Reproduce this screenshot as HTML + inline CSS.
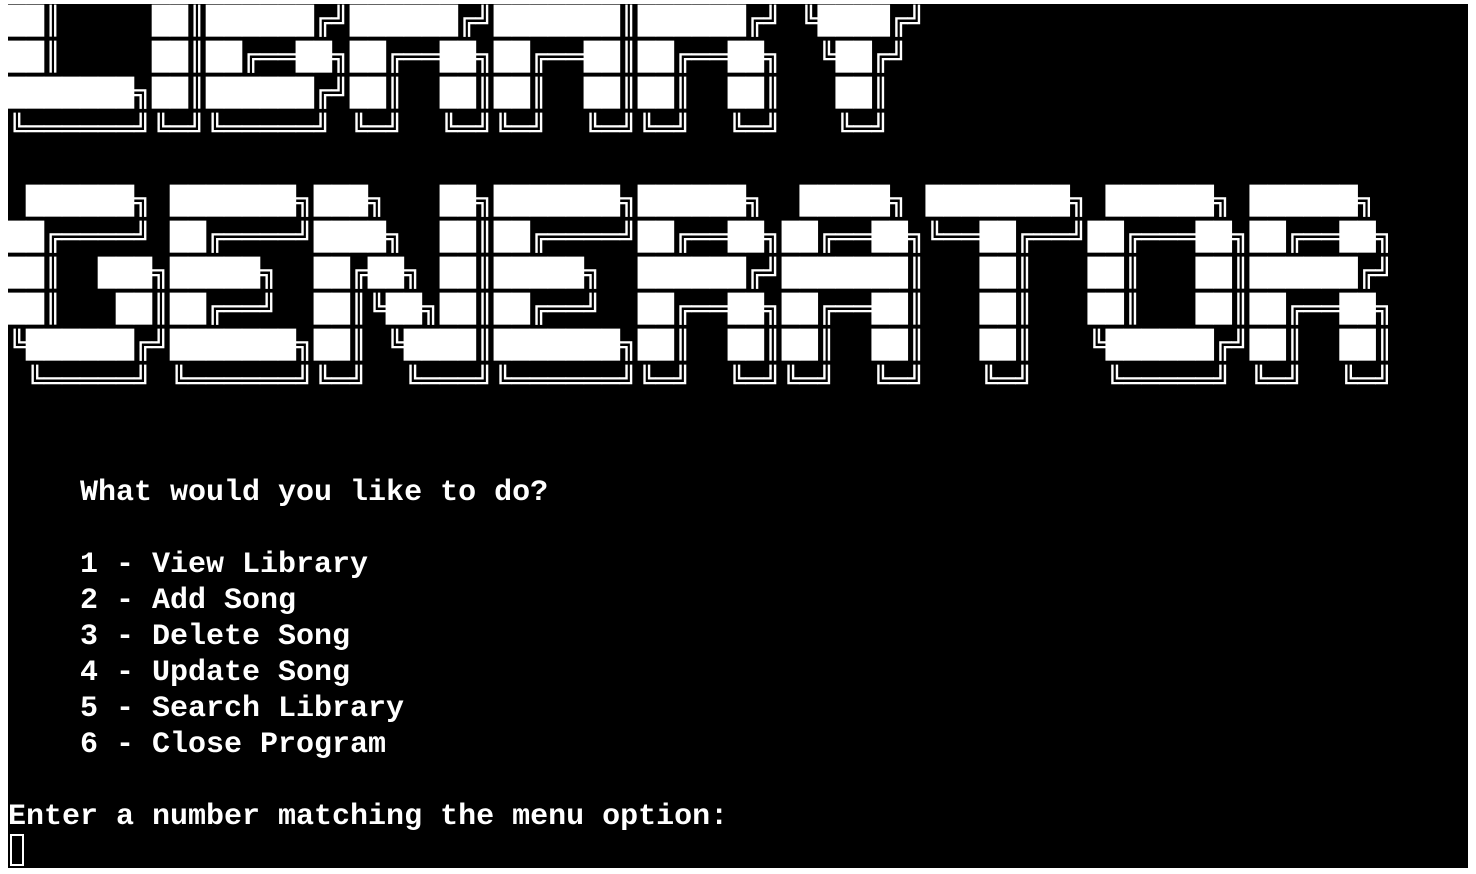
<!DOCTYPE html>
<html><head><meta charset="utf-8"><style>
html,body{margin:0;padding:0;background:#fff;width:1476px;height:874px;overflow:hidden}
#t{position:absolute;left:8px;top:4px;width:1460px;height:864px;background:#000;overflow:hidden}
.l{height:36px;line-height:36px;white-space:pre;color:#fff;font-size:30px}
.a{font-family:"DejaVu Sans Mono","Liberation Mono",monospace;font-size:29.9px;transform:scaleY(0.9);transform-origin:50% 50%}
.x{font-family:"Liberation Mono","DejaVu Sans Mono",monospace;font-weight:bold;position:relative;top:3px}
#c{position:absolute;left:2px;top:830px;width:14px;height:32px;border:2px solid #fff;box-sizing:border-box}
</style></head><body><div id="t">
<div class="l a">██║     ██║██████╔╝██████╔╝███████║██████╔╝ ╚████╔╝ </div>
<div class="l a">██║     ██║██╔══██╗██╔══██╗██╔══██║██╔══██╗  ╚██╔╝  </div>
<div class="l a">███████╗██║██████╔╝██║  ██║██║  ██║██║  ██║   ██║   </div>
<div class="l a">╚══════╝╚═╝╚═════╝ ╚═╝  ╚═╝╚═╝  ╚═╝╚═╝  ╚═╝   ╚═╝   </div>
<div class="l a"> </div>
<div class="l a"> ██████╗ ███████╗███╗   ██╗███████╗██████╗  █████╗ ████████╗ ██████╗ ██████╗ </div>
<div class="l a">██╔════╝ ██╔════╝████╗  ██║██╔════╝██╔══██╗██╔══██╗╚══██╔══╝██╔═══██╗██╔══██╗</div>
<div class="l a">██║  ███╗█████╗  ██╔██╗ ██║█████╗  ██████╔╝███████║   ██║   ██║   ██║██████╔╝</div>
<div class="l a">██║   ██║██╔══╝  ██║╚██╗██║██╔══╝  ██╔══██╗██╔══██║   ██║   ██║   ██║██╔══██╗</div>
<div class="l a">╚██████╔╝███████╗██║ ╚████║███████╗██║  ██║██║  ██║   ██║   ╚██████╔╝██║  ██║</div>
<div class="l a"> ╚═════╝ ╚══════╝╚═╝  ╚═══╝╚══════╝╚═╝  ╚═╝╚═╝  ╚═╝   ╚═╝    ╚═════╝ ╚═╝  ╚═╝</div>
<div class="l x"> </div>
<div class="l x"> </div>
<div class="l x">    What would you like to do?</div>
<div class="l x"> </div>
<div class="l x">    1 - View Library</div>
<div class="l x">    2 - Add Song</div>
<div class="l x">    3 - Delete Song</div>
<div class="l x">    4 - Update Song</div>
<div class="l x">    5 - Search Library</div>
<div class="l x">    6 - Close Program</div>
<div class="l x"> </div>
<div class="l x">Enter a number matching the menu option:</div>
<div id="c"></div>
</div></body></html>
